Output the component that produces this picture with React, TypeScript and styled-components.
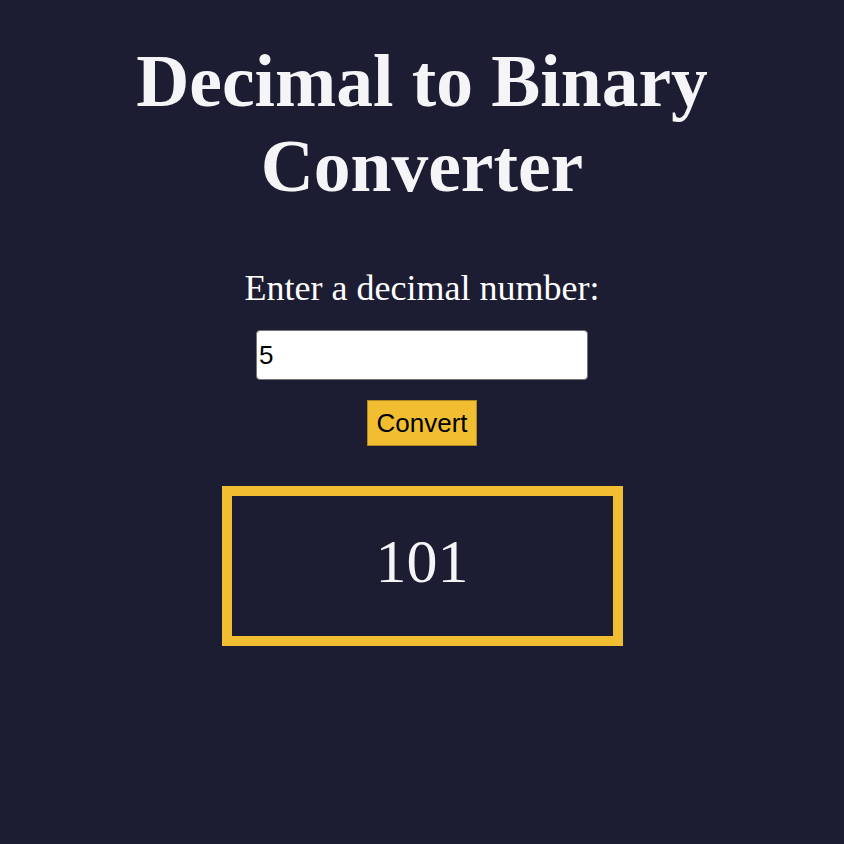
import React, { useState } from "react";
import styled, { createGlobalStyle } from "styled-components";

const Global = createGlobalStyle`
  html, body { margin: 0; padding: 0; background: #1c1c32; }
  body { font-family: "Liberation Serif", "Times New Roman", serif; color: #f5f5f7; }
`;

const Page = styled.main`
  min-height: 844px;
  display: flex;
  flex-direction: column;
  align-items: center;
  padding-top: 39px;
  box-sizing: border-box;
`;

const Title = styled.h1`
  margin: 0;
  width: 640px;
  text-align: center;
  font-size: 73.5px;
  font-weight: bold;
  line-height: 85px;
  color: #f5f5f7;
`;

const Label = styled.label`
  margin-top: 58px;
  font-size: 36px;
  line-height: 42px;
  color: #ffffff;
`;

const Input = styled.input`
  margin-top: 21px;
  width: 332px;
  height: 50px;
  box-sizing: border-box;
  padding: 0 2px;
  border: 1px solid #767676;
  border-radius: 4px;
  background: #fff;
  font-family: "Liberation Sans", Arial, sans-serif;
  font-size: 26px;
  color: #000;
  outline: none;
`;

const Button = styled.button`
  margin-top: 20px;
  width: 110px;
  height: 46px;
  box-sizing: border-box;
  border: 1px solid #b08a20;
  background: #f0be30;
  font-family: "Liberation Sans", Arial, sans-serif;
  font-size: 26px;
  color: #000;
  padding: 0;
`;

const Result = styled.div`
  margin-top: 40px;
  width: 401px;
  height: 160px;
  box-sizing: border-box;
  border: 10px solid #f0be30;
  display: flex;
  align-items: center;
  justify-content: center;
  padding-bottom: 10px;
  font-size: 62px;
  color: #f5f5f7;
`;

export default function App() {
  const [value, setValue] = useState("5");
  const [result, setResult] = useState("101");
  return (
    <>
      <Global />
      <Page>
        <Title>Decimal to Binary Converter</Title>
        <Label htmlFor="dec">Enter a decimal number:</Label>
        <Input id="dec" value={value} onChange={(e) => setValue(e.target.value)} />
        <Button onClick={() => setResult((parseInt(value, 10) || 0).toString(2))}>Convert</Button>
        <Result>{result}</Result>
      </Page>
    </>
  );
}
